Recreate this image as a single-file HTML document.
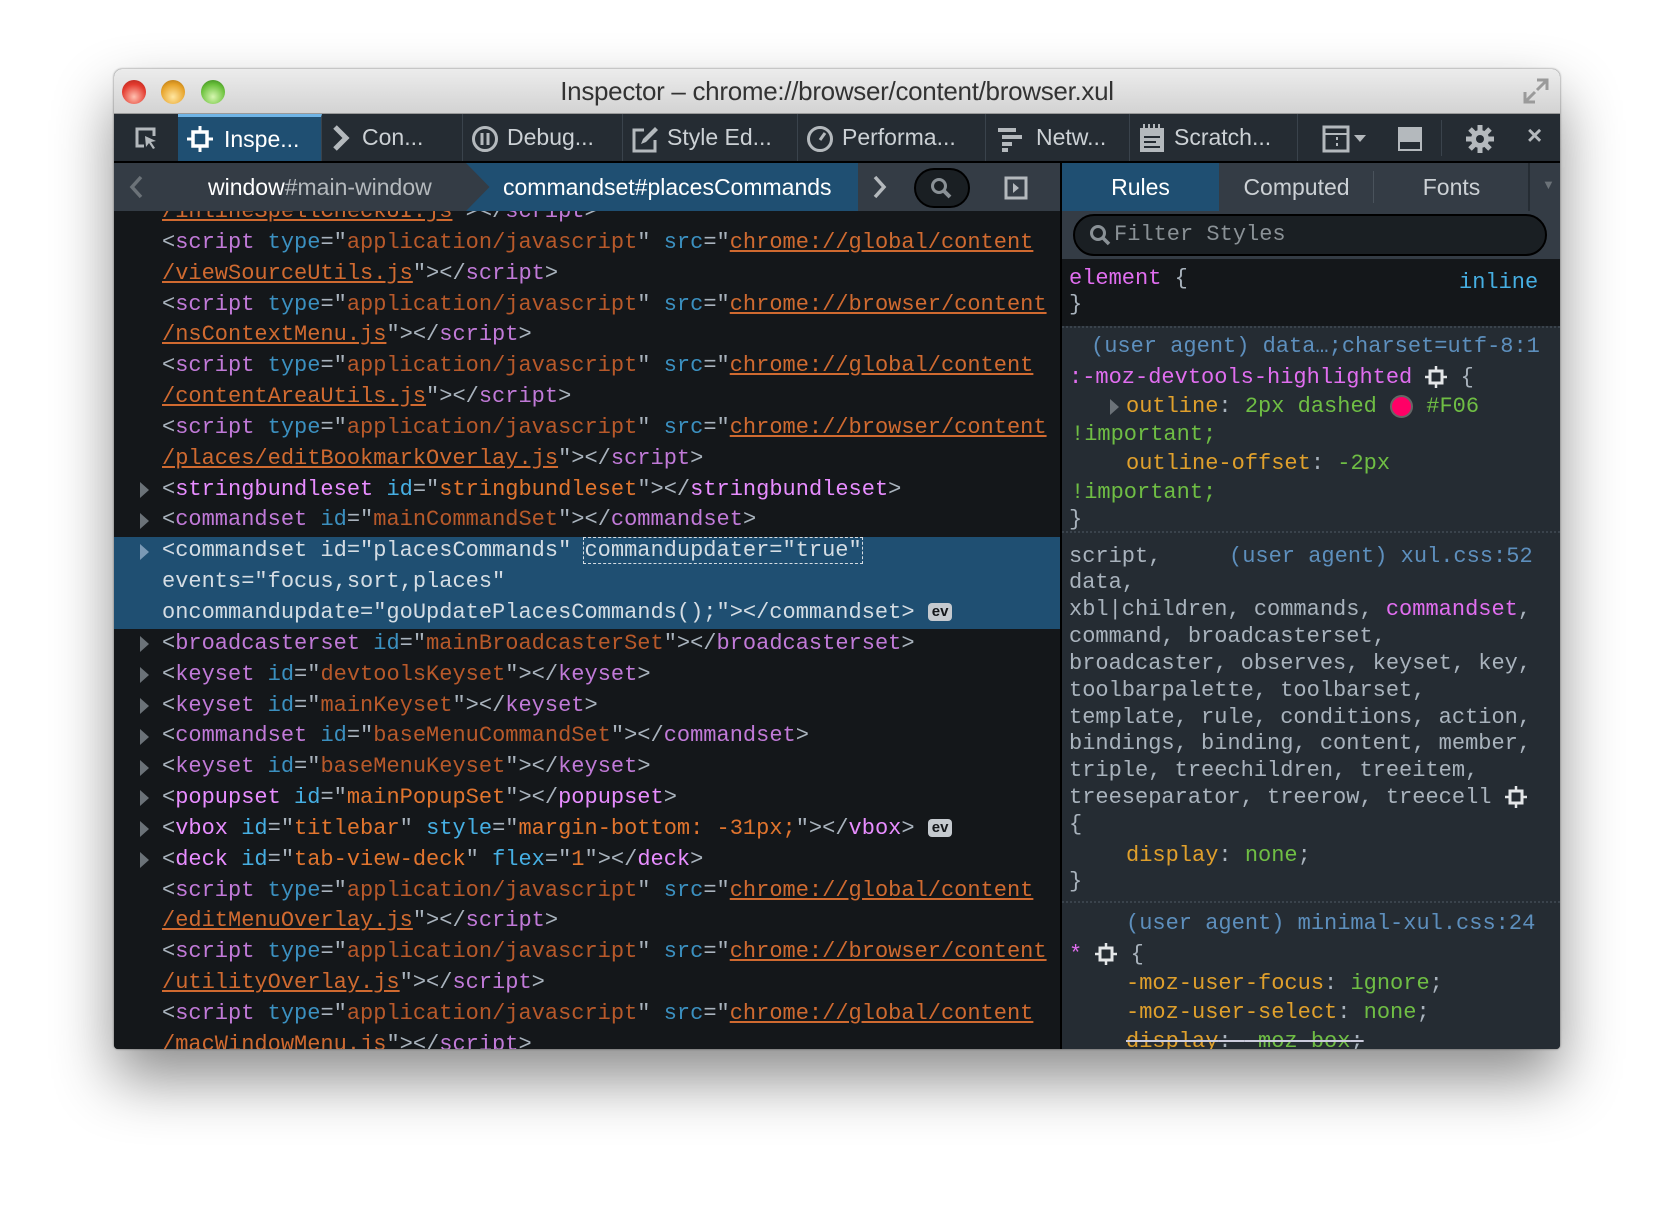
<!DOCTYPE html>
<html><head><meta charset="utf-8"><style>
*{margin:0;padding:0;box-sizing:border-box}
body{width:1674px;height:1208px;background:#fff;position:relative;overflow:hidden;font-family:"Liberation Sans",sans-serif}
#win{position:absolute;left:114px;top:69px;width:1446px;height:980px;border-radius:8px 8px 4px 4px;overflow:hidden;box-shadow:0 30px 60px rgba(0,0,0,.45),0 0 2px rgba(0,0,0,.5);background:#181d20}
#title{position:absolute;left:0;top:0;width:100%;height:45px;background:linear-gradient(#ececec,#d3d3d3);border-bottom:1px solid #999}
#title .t{position:absolute;left:0;width:100%;top:7px;text-align:center;font-size:26px;color:#333;letter-spacing:-.3px}
.light{position:absolute;top:11px;width:24px;height:24px;border-radius:50%}
#tb{position:absolute;left:0;top:45px;width:100%;height:49px;background:#252c33;border-bottom:2px solid #000}
.tab{position:absolute;top:0;height:47px;color:#ccd1d5;font-size:23px;line-height:47px;border-right:1px solid #3a434c}
.tab svg{position:absolute;top:11px}
#bc{position:absolute;left:0;top:94px;width:946px;height:48px;background:#343c45}
#rt{position:absolute;left:946px;top:94px;width:500px;height:48px;background:#343c45;border-left:2px solid #000}
#mk{position:absolute;left:0;top:142px;width:946px;height:838px;overflow:hidden;background:#14171a}
#rp{position:absolute;left:946px;top:142px;width:500px;height:838px;overflow:hidden;background:#252c33;border-left:2px solid #000}
.m{position:absolute;left:48px;font-family:"Liberation Mono",monospace;font-size:22px;line-height:30.85px;white-space:pre;color:#a9b3bd}
.tg{color:#c17ad8}.tb{color:#e88dff}.an{color:#3b90c0}.ab{color:#46afe3}.av{color:#b8592a}.avb{color:#e2752e}
.lk{color:#d06a30;text-decoration:underline}
.arr{position:absolute;left:26px;width:0;height:0;border-top:8px solid transparent;border-bottom:8px solid transparent;border-left:9px solid #6b7278}
.r{position:absolute;font-family:"Liberation Mono",monospace;font-size:22px;line-height:28px;white-space:pre;color:#a9b3bd}
.sl{color:#e16ef0}.pn{color:#e0a02c}.pv{color:#6fbe44}.src{color:#5d8fbd}
.sep{position:absolute;left:0;width:100%;border-top:2px dotted #3a434c}
.ev{display:inline-block;background:#c5cacf;color:#14171a;font-size:15px;line-height:18px;padding:0 4px;border-radius:4px;vertical-align:middle;font-family:"Liberation Sans",sans-serif;font-weight:bold}
.hi{display:inline-block;width:22px;height:22px;vertical-align:middle;position:relative}
</style></head><body>
<div id="win">
 <div id="title">
  <div class="light" style="left:8px;background:radial-gradient(circle at 50% 70%,#ffc0b0,#e33b2f 60%,#a8221a)"></div>
  <div class="light" style="left:47px;background:radial-gradient(circle at 50% 70%,#ffe6a0,#e7a32a 60%,#a66a10)"></div>
  <div class="light" style="left:87px;background:radial-gradient(circle at 50% 70%,#d6f6b0,#6bc13c 60%,#2f7a17)"></div>
  <div class="t">Inspector – chrome://browser/content/browser.xul</div>
  <svg style="position:absolute;right:10px;top:8px" width="28" height="28" viewBox="0 0 28 28"><path d="M15 3h10v10M25 3L15 13M3 15v10h10M3 25l10-10" stroke="#9a9a9a" stroke-width="3" fill="none"/></svg>
 </div>
 <div id="tb">
  <svg style="position:absolute;left:20px;top:12px" width="26" height="26" viewBox="0 0 26 26"><path d="M10 20H3V3h17v7" stroke="#b4b9bd" stroke-width="3" fill="none"/><path d="M11 10l11 5-5 1 4 6-2 1-4-6-3 4z" fill="#b4b9bd"/></svg>
  <div class="tab" style="left:64px;width:144px;background:#1f4f72;border-top:3px solid #6fb4e6;line-height:44px;color:#fff"><svg style="left:8px;top:8px" width="28" height="28" viewBox="0 0 28 28"><rect x="7" y="7" width="14" height="14" fill="none" stroke="#fff" stroke-width="3.5"/><path d="M14 1v6M14 21v6M1 14h6M21 14h6" stroke="#fff" stroke-width="3"/></svg><span style="position:absolute;left:46px">Inspe...</span></div>
  <div class="tab" style="left:208px;width:141px"><svg style="left:8px" width="24" height="26" viewBox="0 0 24 26"><path d="M5 2l11 11L5 24" stroke="#b4b9bd" stroke-width="5" fill="none"/></svg><span style="position:absolute;left:40px">Con...</span></div>
  <div class="tab" style="left:349px;width:160px"><svg style="left:8px" width="28" height="28" viewBox="0 0 28 28"><circle cx="14" cy="14" r="11.5" stroke="#b4b9bd" stroke-width="3" fill="none"/><path d="M11 8v12M17 8v12" stroke="#b4b9bd" stroke-width="3"/></svg><span style="position:absolute;left:44px">Debug...</span></div>
  <div class="tab" style="left:509px;width:175px"><svg style="left:8px" width="28" height="28" viewBox="0 0 28 28"><path d="M13 5H3v21h21V15" stroke="#b4b9bd" stroke-width="3" fill="none"/><path d="M24 2l3 3-12 12-5 2 2-5z" fill="#b4b9bd"/></svg><span style="position:absolute;left:44px">Style Ed...</span></div>
  <div class="tab" style="left:684px;width:188px"><svg style="left:8px" width="28" height="28" viewBox="0 0 28 28"><circle cx="14" cy="14" r="11.5" stroke="#b4b9bd" stroke-width="3" fill="none"/><path d="M14 15l5-7" stroke="#b4b9bd" stroke-width="3"/></svg><span style="position:absolute;left:44px">Performa...</span></div>
  <div class="tab" style="left:872px;width:144px"><svg style="left:10px" width="30" height="28" viewBox="0 0 30 28"><path d="M2 5h18M6 12h20M6 19h10M6 25h6" stroke="#b4b9bd" stroke-width="4"/></svg><span style="position:absolute;left:50px">Netw...</span></div>
  <div class="tab" style="left:1016px;width:168px"><svg style="left:8px;top:9px" width="28" height="30" viewBox="0 0 28 30"><rect x="2" y="5" width="24" height="24" fill="#b4b9bd"/><path d="M6 1v6M11 1v6M16 1v6M21 1v6" stroke="#b4b9bd" stroke-width="2"/><path d="M6 14h16M6 19h12M6 24h16" stroke="#252c33" stroke-width="2"/></svg><span style="position:absolute;left:44px">Scratch...</span></div>
  <svg style="position:absolute;left:1208px;top:11px" width="50" height="28" viewBox="0 0 50 28"><rect x="2" y="2" width="24" height="24" stroke="#b4b9bd" stroke-width="3" fill="none"/><path d="M2 9h24M15 12v3M15 18v3" stroke="#b4b9bd" stroke-width="2"/><path d="M32 10h12l-6 7z" fill="#b4b9bd"/></svg>
  <svg style="position:absolute;left:1282px;top:11px" width="28" height="28" viewBox="0 0 28 28"><rect x="2" y="2" width="24" height="24" fill="#b4b9bd"/><rect x="4" y="17" width="20" height="7" fill="#252c33"/></svg>
  <div style="position:absolute;left:1327px;top:6px;height:36px;border-left:1px solid #3a434c"></div>
  <svg style="position:absolute;left:1350px;top:9px" width="32" height="32" viewBox="0 0 32 32"><g stroke="#b4b9bd" stroke-width="5"><path d="M16 2v28M2 16h28M6 6l20 20M26 6L6 26"/></g><circle cx="16" cy="16" r="9" fill="#b4b9bd"/><circle cx="16" cy="16" r="4" fill="#252c33"/></svg>
  <div style="position:absolute;left:1413px;top:6px;color:#b4b9bd;font-size:26px;font-weight:bold">×</div>
 </div>
 <div id="bc">
  <svg style="position:absolute;left:14px;top:12px" width="16" height="24" viewBox="0 0 16 24"><path d="M13 2L4 12l9 10" stroke="#6b7278" stroke-width="3.5" fill="none"/></svg>
  <div style="position:absolute;left:94px;top:0;line-height:48px;font-size:23px;color:#fff">window<span style="color:#b4b9bd">#main-window</span></div>
  <div style="position:absolute;left:352px;top:0;width:392px;height:48px;background:#1f4f72;clip-path:polygon(0 0,100% 0,100% 100%,0 100%,6% 50%)"></div>
  <div style="position:absolute;left:389px;top:0;line-height:48px;font-size:23px;color:#fff">commandset#placesCommands</div>
  <svg style="position:absolute;left:758px;top:12px" width="16" height="24" viewBox="0 0 16 24"><path d="M3 2l9 10-9 10" stroke="#b4b9bd" stroke-width="3.5" fill="none"/></svg>
  <div style="position:absolute;left:800px;top:5px;width:56px;height:40px;border-radius:20px;background:#1a1f23;border:2px solid #000"></div>
  <svg style="position:absolute;left:815px;top:13px" width="24" height="24" viewBox="0 0 24 24"><circle cx="10" cy="10" r="6.5" stroke="#8a9196" stroke-width="3" fill="none"/><path d="M15 15l6 6" stroke="#8a9196" stroke-width="4"/></svg>
  <svg style="position:absolute;left:890px;top:13px" width="24" height="24" viewBox="0 0 24 24"><rect x="2" y="2" width="20" height="20" stroke="#b4b9bd" stroke-width="3" fill="none"/><path d="M9 7l6 5-6 5z" fill="#b4b9bd"/></svg>
 </div>
 <div id="rt">
  <div style="position:absolute;left:0;top:0;width:157px;height:48px;background:#1f4f72;color:#fff;text-align:center;line-height:48px;font-size:23px">Rules</div>
  <div style="position:absolute;left:157px;top:0;width:155px;height:48px;color:#ccd1d5;text-align:center;line-height:48px;font-size:23px">Computed</div>
  <div style="position:absolute;left:311px;top:8px;height:32px;border-left:1px solid #4a535c"></div>
  <div style="position:absolute;left:312px;top:0;width:155px;height:48px;color:#ccd1d5;text-align:center;line-height:48px;font-size:23px">Fonts</div>
  <div style="position:absolute;left:466px;top:0;height:48px;border-left:2px solid #252c33"></div>
  <div style="position:absolute;left:480px;top:14px;color:#6b7278;font-size:13px">▼</div>
 </div>
 <div id="mk">
  <div style="position:absolute;left:0;top:326px;width:946px;height:92px;background:#1f4f72"></div>
  <div class="arr" style="top:271px"></div><div class="arr" style="top:302px"></div><div class="arr" style="top:333px;border-left-color:#7a99b5"></div>
  <div class="arr" style="top:425px"></div><div class="arr" style="top:456px"></div><div class="arr" style="top:487px"></div><div class="arr" style="top:518px"></div><div class="arr" style="top:549px"></div><div class="arr" style="top:579px"></div><div class="arr" style="top:610px"></div><div class="arr" style="top:641px"></div>
  <div class="m" style="top:-14px"><span class="lk">/inlineSpellCheckUI.js</span>"&gt;&lt;/<span class="tg">script</span>&gt;
&lt;<span class="tg">script</span> <span class="an">type</span>="<span class="av">application/javascript</span>" <span class="an">src</span>="<span class="lk">chrome://global/content</span>
<span class="lk">/viewSourceUtils.js</span>"&gt;&lt;/<span class="tg">script</span>&gt;
&lt;<span class="tg">script</span> <span class="an">type</span>="<span class="av">application/javascript</span>" <span class="an">src</span>="<span class="lk">chrome://browser/content</span>
<span class="lk">/nsContextMenu.js</span>"&gt;&lt;/<span class="tg">script</span>&gt;
&lt;<span class="tg">script</span> <span class="an">type</span>="<span class="av">application/javascript</span>" <span class="an">src</span>="<span class="lk">chrome://global/content</span>
<span class="lk">/contentAreaUtils.js</span>"&gt;&lt;/<span class="tg">script</span>&gt;
&lt;<span class="tg">script</span> <span class="an">type</span>="<span class="av">application/javascript</span>" <span class="an">src</span>="<span class="lk">chrome://browser/content</span>
<span class="lk">/places/editBookmarkOverlay.js</span>"&gt;&lt;/<span class="tg">script</span>&gt;
&lt;<span class="tb">stringbundleset</span> <span class="ab">id</span>="<span class="avb">stringbundleset</span>"&gt;&lt;/<span class="tb">stringbundleset</span>&gt;
&lt;<span class="tg">commandset</span> <span class="an">id</span>="<span class="av">mainCommandSet</span>"&gt;&lt;/<span class="tg">commandset</span>&gt;
<span style="color:#d5dde4">&lt;commandset id="placesCommands" <span style="outline:1px dashed #d5dde4">commandupdater="true"</span>
events="focus,sort,places"
oncommandupdate="goUpdatePlacesCommands();"&gt;&lt;/commandset&gt;</span> <span class="ev">ev</span>
&lt;<span class="tg">broadcasterset</span> <span class="an">id</span>="<span class="av">mainBroadcasterSet</span>"&gt;&lt;/<span class="tg">broadcasterset</span>&gt;
&lt;<span class="tg">keyset</span> <span class="an">id</span>="<span class="av">devtoolsKeyset</span>"&gt;&lt;/<span class="tg">keyset</span>&gt;
&lt;<span class="tg">keyset</span> <span class="an">id</span>="<span class="av">mainKeyset</span>"&gt;&lt;/<span class="tg">keyset</span>&gt;
&lt;<span class="tg">commandset</span> <span class="an">id</span>="<span class="av">baseMenuCommandSet</span>"&gt;&lt;/<span class="tg">commandset</span>&gt;
&lt;<span class="tg">keyset</span> <span class="an">id</span>="<span class="av">baseMenuKeyset</span>"&gt;&lt;/<span class="tg">keyset</span>&gt;
&lt;<span class="tb">popupset</span> <span class="ab">id</span>="<span class="avb">mainPopupSet</span>"&gt;&lt;/<span class="tb">popupset</span>&gt;
&lt;<span class="tb">vbox</span> <span class="ab">id</span>="<span class="avb">titlebar</span>" <span class="ab">style</span>="<span class="avb">margin-bottom: -31px;</span>"&gt;&lt;/<span class="tb">vbox</span>&gt; <span class="ev">ev</span>
&lt;<span class="tb">deck</span> <span class="ab">id</span>="<span class="avb">tab-view-deck</span>" <span class="ab">flex</span>="<span class="avb">1</span>"&gt;&lt;/<span class="tb">deck</span>&gt;
&lt;<span class="tg">script</span> <span class="an">type</span>="<span class="av">application/javascript</span>" <span class="an">src</span>="<span class="lk">chrome://global/content</span>
<span class="lk">/editMenuOverlay.js</span>"&gt;&lt;/<span class="tg">script</span>&gt;
&lt;<span class="tg">script</span> <span class="an">type</span>="<span class="av">application/javascript</span>" <span class="an">src</span>="<span class="lk">chrome://browser/content</span>
<span class="lk">/utilityOverlay.js</span>"&gt;&lt;/<span class="tg">script</span>&gt;
&lt;<span class="tg">script</span> <span class="an">type</span>="<span class="av">application/javascript</span>" <span class="an">src</span>="<span class="lk">chrome://global/content</span>
<span class="lk">/macWindowMenu.js</span>"&gt;&lt;/<span class="tg">script</span>&gt;</div>
 </div>
 <div id="rp">
  <div style="position:absolute;left:0;top:0;width:100%;height:48px;background:#343c45"></div>
  <div style="position:absolute;left:11px;top:3px;width:474px;height:42px;border-radius:21px;background:#1a1f23;border:2px solid #000"></div>
  <svg style="position:absolute;left:26px;top:12px" width="24" height="24" viewBox="0 0 24 24"><circle cx="10" cy="10" r="6.5" stroke="#8a9196" stroke-width="3" fill="none"/><path d="M15 15l6 6" stroke="#8a9196" stroke-width="3.5"/></svg>
  <div class="r" style="left:52px;top:10px;color:#8a9196">Filter Styles</div>
  <div style="position:absolute;left:0;top:48px;width:100%;height:67px;background:#14171a"></div>
  <div class="r" style="left:7px;top:54px"><span class="sl">element</span> {</div>
  <div class="r" style="left:397px;top:58px;color:#46afe3">inline</div>
  <div class="r" style="left:7px;top:80px">}</div>
  <div class="sep" style="top:115px"></div>
  <div class="r src" style="left:29px;top:122px">(user agent) data…;charset=utf-8:1</div>
  <div class="r" style="left:7px;top:153px"><span class="sl">:-moz-devtools-highlighted</span> <span class="hi"><svg width="22" height="22" viewBox="0 0 22 22"><rect x="5" y="5" width="12" height="12" fill="none" stroke="#e4e6e8" stroke-width="3"/><path d="M11 0v5M11 17v5M0 11h5M17 11h5" stroke="#e4e6e8" stroke-width="2.5"/></svg></span> {</div>
  <div style="position:absolute;left:48px;top:188px;width:0;height:0;border-top:8px solid transparent;border-bottom:8px solid transparent;border-left:9px solid #6b7278"></div>
  <div class="r" style="left:64px;top:182px"><span class="pn">outline</span>: <span class="pv">2px dashed</span> <span style="display:inline-block;width:23px;height:23px;border-radius:50%;background:#f06;border:2px solid #666;vertical-align:middle"></span> <span class="pv">#F06</span></div>
  <div class="r pv" style="left:9px;top:210px">!important;</div>
  <div class="r" style="left:64px;top:239px"><span class="pn">outline-offset</span>: <span class="pv">-2px</span></div>
  <div class="r pv" style="left:9px;top:268px">!important;</div>
  <div class="r" style="left:7px;top:295px">}</div>
  <div class="sep" style="top:320px"></div>
  <div class="r" style="left:7px;top:332px">script,</div>
  <div class="r src" style="left:167px;top:332px">(user agent) xul.css:52</div>
  <div class="r" style="left:7px;top:359px;line-height:26.9px">data,
xbl|children, commands, <span class="sl">commandset</span>,
command, broadcasterset,
broadcaster, observes, keyset, key,
toolbarpalette, toolbarset,
template, rule, conditions, action,
bindings, binding, content, member,
triple, treechildren, treeitem,
treeseparator, treerow, treecell <span class="hi"><svg width="22" height="22" viewBox="0 0 22 22"><rect x="5" y="5" width="12" height="12" fill="none" stroke="#e4e6e8" stroke-width="3"/><path d="M11 0v5M11 17v5M0 11h5M17 11h5" stroke="#e4e6e8" stroke-width="2.5"/></svg></span>
{</div>
  <div class="r" style="left:64px;top:631px"><span class="pn">display</span>: <span class="pv">none</span>;</div>
  <div class="r" style="left:7px;top:657px">}</div>
  <div class="sep" style="top:690px"></div>
  <div class="r src" style="left:64px;top:699px">(user agent) minimal-xul.css:24</div>
  <div class="r" style="left:7px;top:730px"><span class="sl">*</span> <span class="hi"><svg width="22" height="22" viewBox="0 0 22 22"><rect x="5" y="5" width="12" height="12" fill="none" stroke="#e4e6e8" stroke-width="3"/><path d="M11 0v5M11 17v5M0 11h5M17 11h5" stroke="#e4e6e8" stroke-width="2.5"/></svg></span> {</div>
  <div class="r" style="left:64px;top:759px"><span class="pn">-moz-user-focus</span>: <span class="pv">ignore</span>;</div>
  <div class="r" style="left:64px;top:788px"><span class="pn">-moz-user-select</span>: <span class="pv">none</span>;</div>
  <div class="r" style="left:64px;top:817px;text-decoration:line-through;text-decoration-color:#ccd"><span class="pn">display</span>: <span class="pv">-moz-box</span>;</div>
 </div>
</div>
</body></html>
